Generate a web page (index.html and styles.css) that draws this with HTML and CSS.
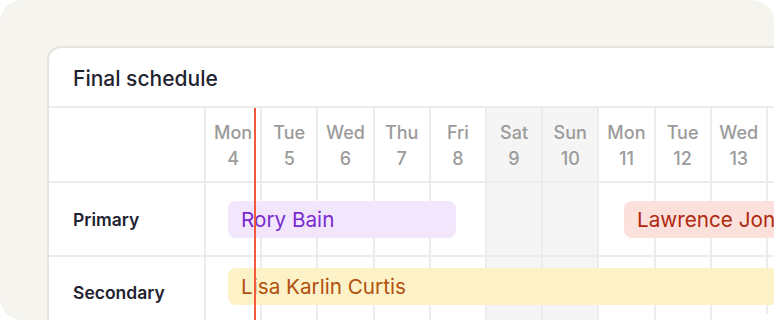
FILE: index.html
```html
<!doctype html>
<html>
<head>
    <meta charset="utf-8">
    <title>Final schedule</title>
    <link rel="stylesheet" href="styles.css">
</head>
<body>
<div class="frame">
	<div class="card">
		<div class="card-title">Final schedule</div>
		<div class="sched">
			<div class="row head">
				<div class="label"></div>
				<div class="day"><span>Mon</span><span>4</span></div>
				<div class="day"><span>Tue</span><span>5</span></div>
				<div class="day"><span>Wed</span><span>6</span></div>
				<div class="day"><span>Thu</span><span>7</span></div>
				<div class="day"><span>Fri</span><span>8</span></div>
				<div class="day wknd"><span>Sat</span><span>9</span></div>
				<div class="day wknd"><span>Sun</span><span>10</span></div>
				<div class="day"><span>Mon</span><span>11</span></div>
				<div class="day"><span>Tue</span><span>12</span></div>
				<div class="day"><span>Wed</span><span>13</span></div>
				<div class="day"></div>
			</div>
			<div class="row lane primary">
				<div class="label">Primary</div>
				<div class="day"></div><div class="day"></div><div class="day"></div><div class="day"></div><div class="day"></div>
				<div class="day wknd"></div><div class="day wknd"></div>
				<div class="day"></div><div class="day"></div><div class="day"></div><div class="day"></div>
				<div class="shift purple" style="left:179px;width:228px">Rory Bain</div>
				<div class="shift red" style="left:575px;width:220px">Lawrence Jones</div>
			</div>
			<div class="row lane secondary">
				<div class="label">Secondary</div>
				<div class="day"></div><div class="day"></div><div class="day"></div><div class="day"></div><div class="day"></div>
				<div class="day wknd"></div><div class="day wknd"></div>
				<div class="day"></div><div class="day"></div><div class="day"></div><div class="day"></div>
				<div class="shift yellow" style="left:179px;width:620px">Lisa Karlin Curtis</div>
			</div>
			<div class="now"></div>
		</div>
	</div>
</div>
</body>
</html>
```

FILE: styles.css
```css
*{margin: 0;padding: 0;box-sizing: border-box;}
body{
	background: #fff;
	font-family: Inter, "Noto Sans", sans-serif;
	color: #1f2430;
}
.frame{
	width: 774px;height: 320px;
	background: #f6f4ef;
	border-radius: 22px;
	overflow: hidden;
	padding: 46px 0 0 47px;
}
.card{
	width: 860px;height: 320px;
	background: #fff;
	border: 2px solid #e6e3de;
	border-radius: 14px;
}
.card-title{
	height: 60px;
	padding: 17px 0 0 24px;
	font-size: 21px;
	line-height: 28px;
	font-weight: 500;
	color: #1f2430;
	border-bottom: 2px solid #ececec;
}
.sched{
	position: relative;
}
.row{
	display: grid;
	grid-template-columns: 155px repeat(11, 56.2px);
	border-bottom: 2px solid #ececec;
	position: relative;
}
.row .day{
	border-left: 2px solid #ececec;
}
.row .wknd{
	background: #f5f5f5;
}
.head{
	height: 75px;
}
.head .day{
	display: flex;
	flex-direction: column;
	align-items: center;
	justify-content: center;
	font-size: 18px;
	line-height: 26px;
	font-weight: 500;
	color: #9b9b9b;
	padding-top: 2px;
}
.lane{
	height: 74px;
}
.lane .label{
	display: flex;
	align-items: center;
	padding-left: 24px;
	font-size: 17.5px;
	font-weight: 600;
	color: #1f2430;
}
.secondary .label{padding-bottom: 2px;}
.shift{
	position: absolute;
	height: 37px;
	border-radius: 8px;
	padding-left: 13px;
	font-size: 20.7px;
	line-height: 37px;
	white-space: nowrap;
	overflow: hidden;
}
.primary .shift{top: 18px;}
.secondary .shift{top: 11px;}
.purple{background: #f2e6fd;color: #7a2bd0;}
.red{background: #fbe0db;color: #b0290e;}
.yellow{background: #fdf2c7;color: #b1500f;}
.now{
	position: absolute;
	left: 205px;top: 0;bottom: -40px;
	width: 2px;
	background: #f35a3b;
	z-index: 5;
}
```
